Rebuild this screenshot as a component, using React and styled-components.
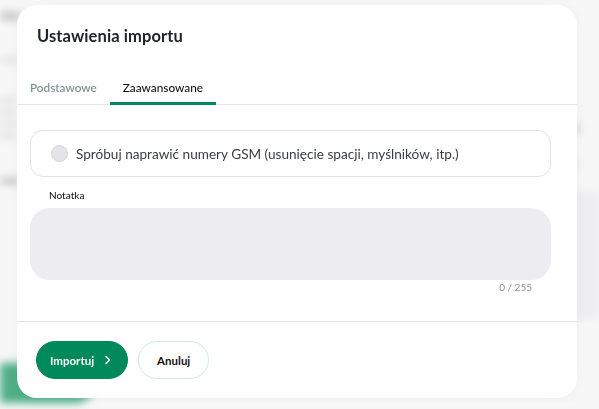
import React, { useState } from 'react';
import styled, { createGlobalStyle } from 'styled-components';

const GlobalStyle = createGlobalStyle`
  html, body {
    margin: 0;
    padding: 0;
    background: #f7f7f7;
    font-family: 'Lato', 'Noto Sans', sans-serif;
  }
  * { box-sizing: border-box; }
`;

// blurred page behind the dialog
const Backdrop = styled.div`
  width: 599px;
  height: 409px;
  overflow: hidden;
  background: #f7f7f7;
  filter: blur(4px);
  display: grid;
  grid-template-columns: 1fr 40px;
`;

const BackLeft = styled.div`
  display: flex;
  flex-direction: column;
  padding: 12px 0 0 0;
`;

const BackBar = styled.div`
  width: ${p => p.$w || 16}px;
  height: ${p => p.$h || 5}px;
  margin-top: ${p => p.$mt || 0}px;
  background: ${p => p.$c || '#d4d4d4'};
  border-radius: 2px;
`;

const BackRight = styled.div`
  display: flex;
  flex-direction: column;
  padding-top: 125px;
`;

const GreenButton = styled.div`
  margin-top: auto;
  margin-bottom: 6px;
  width: 95px;
  height: 40px;
  border-radius: 0 20px 20px 0;
  background: #4fae86;
`;

const Overlay = styled.div`
  position: fixed;
  inset: 0;
  padding: 5px 0 0 17px;
`;

const Modal = styled.div`
  width: 560px;
  height: 393px;
  background: #fff;
  border-radius: 20px;
  box-shadow: 0 0 12px rgba(0, 0, 0, 0.04);
  display: flex;
  flex-direction: column;
  overflow: hidden;
`;

const Title = styled.h2`
  margin: 0;
  padding: 21px 20px 0 20px;
  font-size: 16.5px;
  font-weight: 700;
  color: #20242c;
  letter-spacing: 0.1px;
`;

const Tabs = styled.div`
  display: flex;
  margin-top: 24px;
  border-bottom: 1px solid #e6e6e6;
`;

const Tab = styled.button`
  border: none;
  background: none;
  padding: 0 13px;
  height: 35px;
  font-family: inherit;
  font-size: 11.8px;
  font-weight: 500;
  color: ${p => (p.$active ? '#111' : '#7d8b8b')};
  border-bottom: 3px solid ${p => (p.$active ? '#00895a' : 'transparent')};
  margin-bottom: -1px;
  padding-top: 3px;
  cursor: pointer;
`;

const Body = styled.div`
  flex: 1;
  padding: 25px 26px 0 13px;
  border-bottom: 1px solid #e2e2e2;
`;

const CheckCard = styled.label`
  display: flex;
  align-items: center;
  gap: 8px;
  height: 47px;
  padding: 0 20px;
  border: 1px solid #e2e2e2;
  border-radius: 13px;
  font-size: 13.6px;
  color: #3a3c40;
  cursor: pointer;
`;

const Circle = styled.span`
  width: 17px;
  height: 17px;
  border-radius: 50%;
  background: ${p => (p.$on ? '#00895a' : '#e3e3e9')};
  border: 1px solid #d6d6dc;
  flex-shrink: 0;
`;

const Label = styled.div`
  margin: 12px 0 0 19px;
  font-size: 10px;
  font-weight: 500;
  color: #1a1a1a;
`;

const NoteArea = styled.textarea`
  display: block;
  width: 100%;
  height: 72px;
  margin-top: 7px;
  border: none;
  border-radius: 20px;
  background: #ededf1;
  resize: none;
  outline: none;
  padding: 12px 18px;
  font-family: inherit;
  font-size: 13px;
`;

const Counter = styled.div`
  text-align: right;
  padding-right: 19px;
  margin-top: 1px;
  font-size: 10px;
  color: #8c8f93;
`;

const Footer = styled.div`
  display: flex;
  gap: 10px;
  padding: 19px;
`;

const Button = styled.button`
  height: 38px;
  border-radius: 19px;
  padding: ${p => (p.$primary ? '0 15px 0 13px' : '0 18px')};
  font-family: inherit;
  font-size: 11.5px;
  font-weight: 700;
  display: flex;
  align-items: center;
  gap: 10px;
  cursor: pointer;
  background: ${p => (p.$primary ? '#00895a' : '#fff')};
  color: ${p => (p.$primary ? '#fff' : '#111')};
  border: 1px solid ${p => (p.$primary ? '#00895a' : '#cfe9de')};
`;

const Chevron = () => (
  <svg width="8" height="10" viewBox="0 0 8 10" fill="none">
    <path d="M2 1.5 L5.5 5 L2 8.5" stroke="#fff" strokeWidth="1.4" strokeLinecap="round" strokeLinejoin="round" />
  </svg>
);

export default function App() {
  const [fix, setFix] = useState(false);
  const [note, setNote] = useState('');

  return (
    <>
      <GlobalStyle />
      <Backdrop>
        <BackLeft>
          <BackBar $w={20} $h={8} $c="#c2c2c2" />
          <BackBar $w={18} $h={4} $mt={38} />
          <BackBar $w={16} $h={4} $mt={36} />
          <BackBar $w={16} $h={4} $mt={8} />
          <BackBar $w={16} $h={4} $mt={8} />
          <BackBar $w={16} $h={4} $mt={8} />
          <BackBar $w={20} $h={6} $mt={40} $c="#bdbdbd" />
          <GreenButton />
        </BackLeft>
        <BackRight>
          <BackBar $w={22} $h={8} $c="#d3d9d6" />
          <BackBar $w={18} $h={8} $mt={28} $c="#d8dedb" />
          <BackBar $w={40} $h={128} $mt={22} $c="#ededf1" />
        </BackRight>
      </Backdrop>
      <Overlay>
        <Modal>
          <Title>Ustawienia importu</Title>
          <Tabs>
            <Tab>Podstawowe</Tab>
            <Tab $active>Zaawansowane</Tab>
          </Tabs>
          <Body>
            <CheckCard onClick={() => setFix(!fix)}>
              <Circle $on={fix} />
              Spróbuj naprawić numery GSM (usunięcie spacji, myślników, itp.)
            </CheckCard>
            <Label>Notatka</Label>
            <NoteArea value={note} maxLength={255} onChange={e => setNote(e.target.value)} />
            <Counter>{note.length} / 255</Counter>
          </Body>
          <Footer>
            <Button $primary>
              Importuj <Chevron />
            </Button>
            <Button>Anuluj</Button>
          </Footer>
        </Modal>
      </Overlay>
    </>
  );
}
